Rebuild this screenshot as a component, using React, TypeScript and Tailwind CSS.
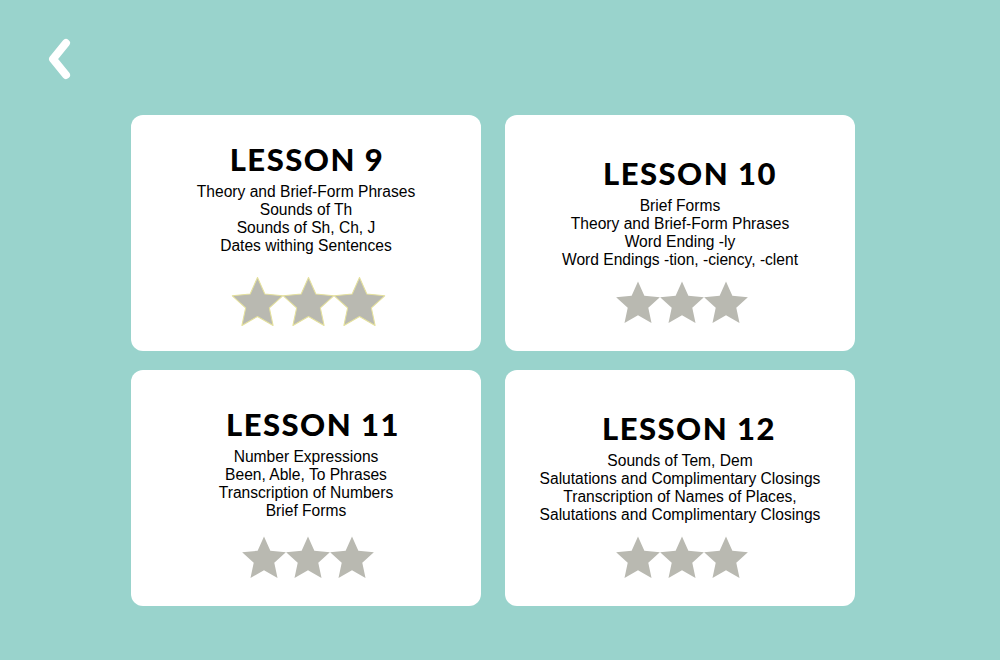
const lessons = [
  {
    num: 9,
    topics: ["Theory and Brief-Form Phrases", "Sounds of Th", "Sounds of Sh, Ch, J", "Dates withing Sentences"],
    pad: "pt-[26px]",
    titleShift: "pl-[2px]",
    starsGap: "mt-[22px]",
    starSize: "w-[53px]",
    outlined: true,
  },
  {
    num: 10,
    topics: ["Brief Forms", "Theory and Brief-Form Phrases", "Word Ending -ly", "Word Endings -tion, -ciency, -clent"],
    pad: "pt-[40px]",
    titleShift: "pl-[20px]",
    starsGap: "mt-[12px]",
    starSize: "w-[46px]",
    outlined: false,
  },
  {
    num: 11,
    topics: ["Number Expressions", "Been, Able, To Phrases", "Transcription of Numbers", "Brief Forms"],
    pad: "pt-[36px]",
    titleShift: "pl-[14px]",
    starsGap: "mt-[16px]",
    starSize: "w-[46px]",
    outlined: false,
  },
  {
    num: 12,
    topics: [
      "Sounds of Tem, Dem",
      "Salutations and Complimentary Closings",
      "Transcription of Names of Places,",
      "Salutations and Complimentary Closings",
    ],
    pad: "pt-[40px]",
    titleShift: "pl-[18px]",
    starsGap: "mt-[12px]",
    starSize: "w-[46px]",
    outlined: false,
  },
];

// five-point star, inner radius ~0.47 of outer
function Star({ size, outlined }: { size: string; outlined: boolean }) {
  return (
    <svg viewBox="0 0 100 93" className={`${size} -mx-[1px] shrink-0`}>
      <polygon
        points="50,1 63.8,32 97.55,35.55 72.35,58.3 79.39,91.45 50,74.5 20.61,91.45 27.65,58.3 2.45,35.55 36.2,32"
        fill="#b9b9b1"
        stroke={outlined ? "#e4e09c" : "none"}
        strokeWidth={outlined ? 2 : 0}
        strokeLinejoin="round"
      />
    </svg>
  );
}

function LessonCard({ lesson }: { lesson: (typeof lessons)[number] }) {
  return (
    <div className={`flex h-[236px] flex-col items-center rounded-[12px] bg-white ${lesson.pad}`}>
      <h2
        className={`font-[family-name:Lato,'Liberation_Sans',sans-serif] text-[31px] font-black leading-[36px] tracking-[1.5px] text-black ${lesson.titleShift}`}
      >
        LESSON {lesson.num}
      </h2>
      <div className="mt-[6px] flex flex-col items-center font-[family-name:'Liberation_Sans',Arial,sans-serif] text-[15.6px] leading-[18px] text-black">
        {lesson.topics.map((t, i) => (
          <p key={i}>{t}</p>
        ))}
      </div>
      <div className={`flex items-center ${lesson.starsGap} pl-[4px]`}>
        {[0, 1, 2].map((i) => (
          <Star key={i} size={lesson.starSize} outlined={lesson.outlined} />
        ))}
      </div>
    </div>
  );
}

export default function App() {
  return (
    <div className="flex h-[660px] w-[1000px] flex-col bg-[#99d3cc]">
      <div className="pl-[46px] pt-[38px]">
        <button className="block h-[42px] w-[30px]">
          <svg viewBox="0 0 30 42" className="h-[42px] w-[30px]">
            <path d="M20 5 L7 21 L20 37" fill="none" stroke="white" strokeWidth="8" strokeLinecap="round" strokeLinejoin="round" />
          </svg>
        </button>
      </div>
      <div className="mt-[35px] ml-[131px] grid w-[724px] grid-cols-2 gap-x-[24px] gap-y-[19px]">
        {lessons.map((l) => (
          <LessonCard key={l.num} lesson={l} />
        ))}
      </div>
    </div>
  );
}
